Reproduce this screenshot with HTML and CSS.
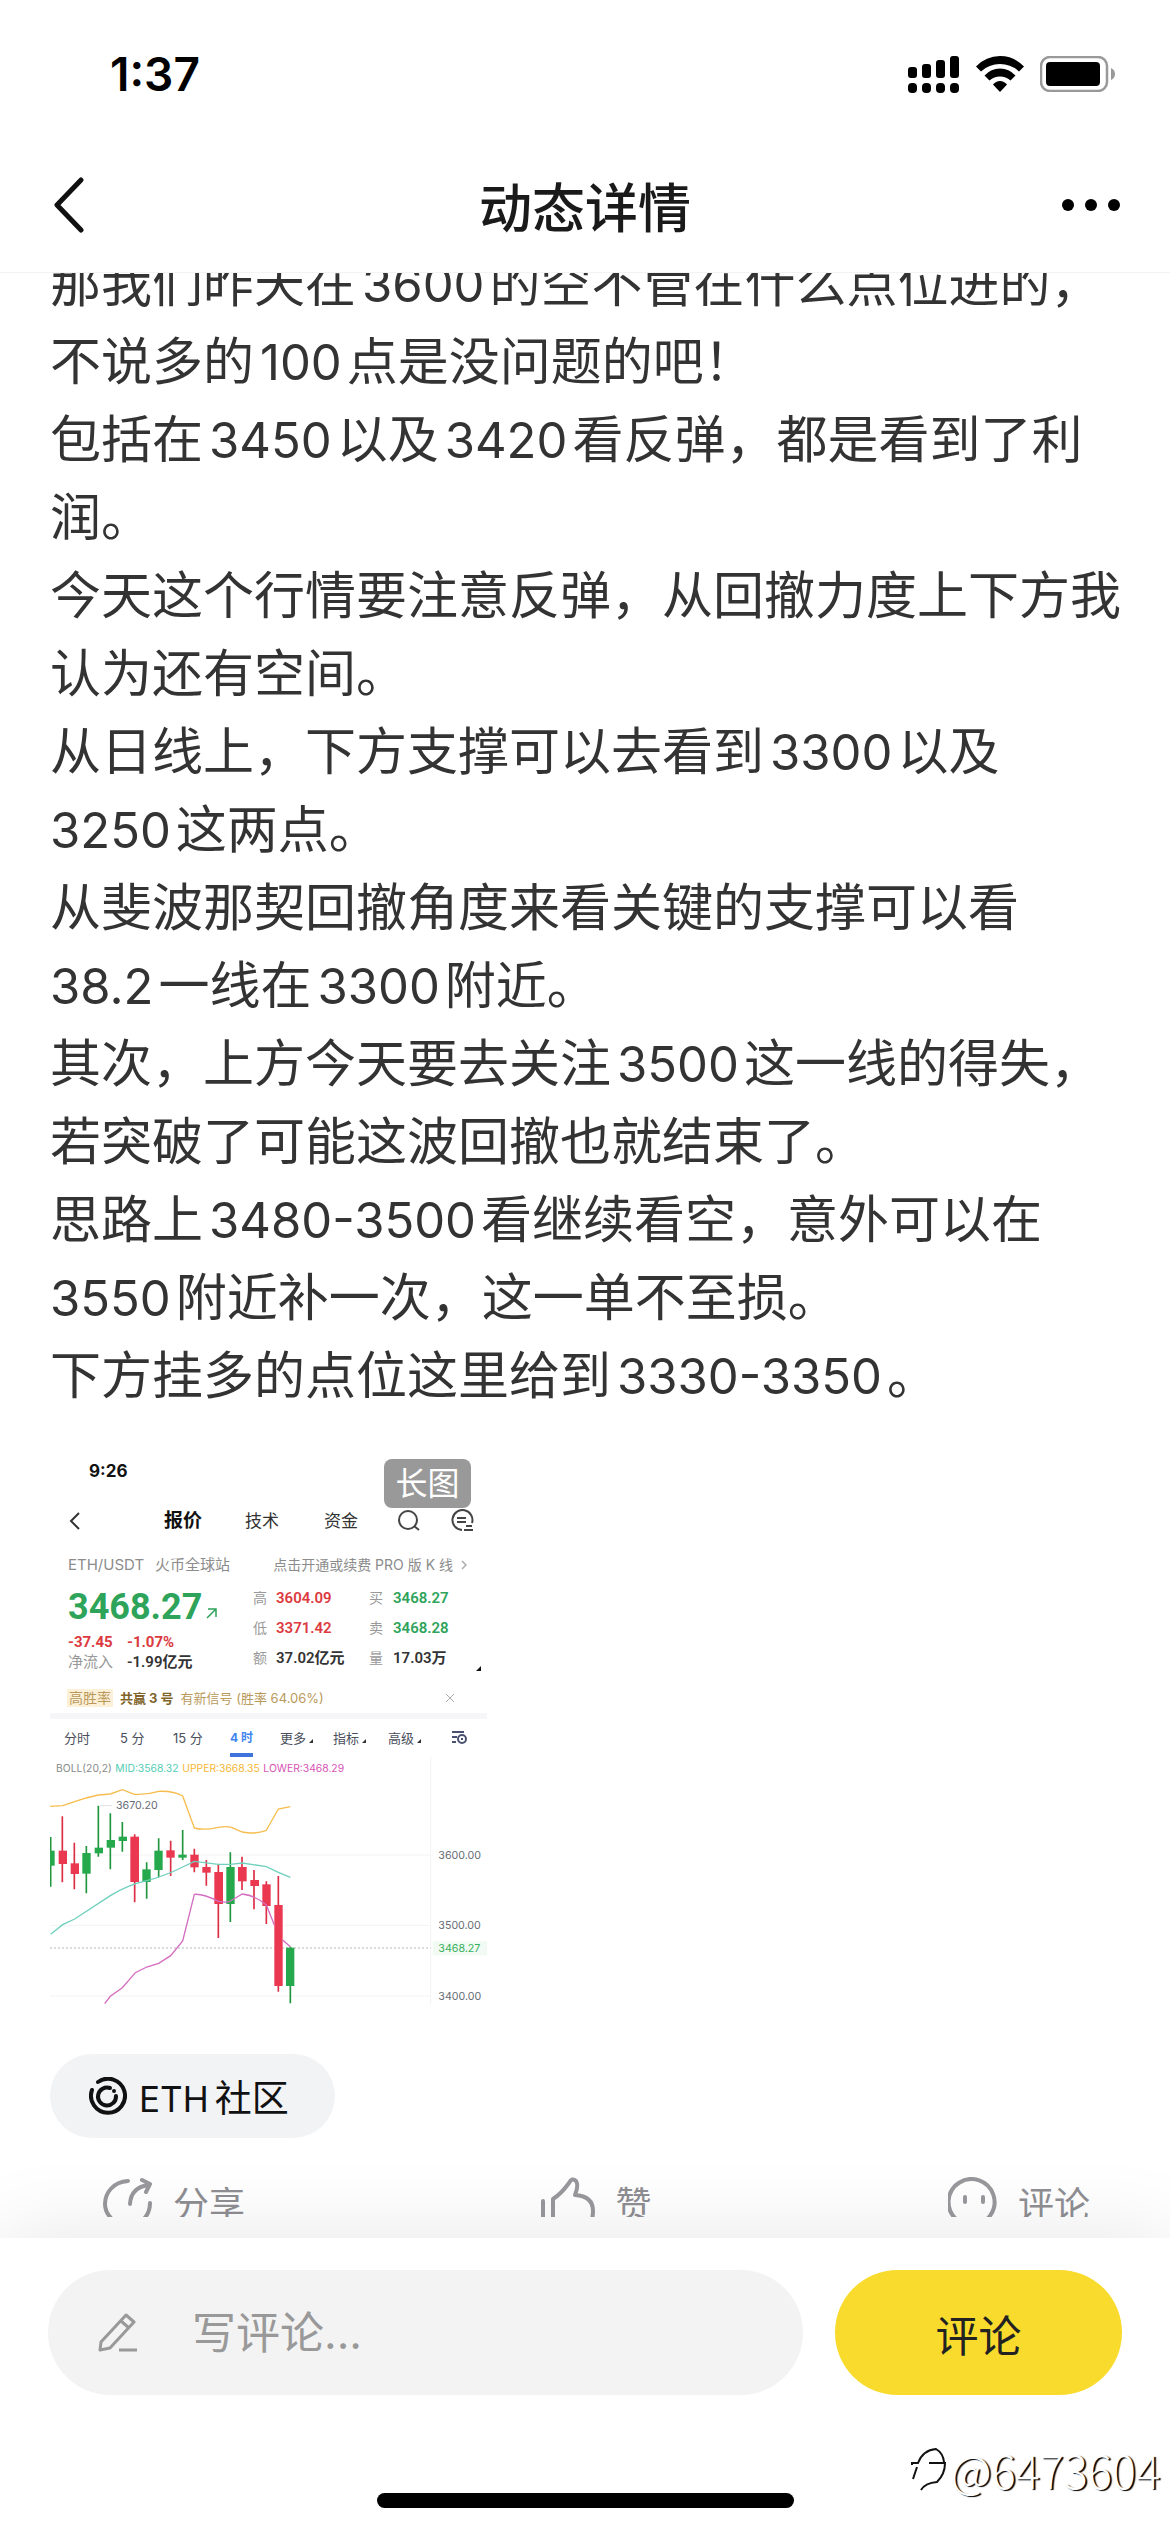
FILE: index.html
```html
<!DOCTYPE html>
<html lang="zh-CN">
<head>
  <meta charset="UTF-8">
  <meta name="viewport" content="width=device-width, initial-scale=1.0">
  <title>动态详情</title>
  <link rel="stylesheet" href="styles.css">
</head>
<body>
  <div class="page">
    <header class="header">
      <div class="status-bar">
        <span class="time">1:37</span>
        <div class="status-icons">
          <svg width="52" height="38" viewBox="0 0 52 38">
            <rect x="0" y="12" width="9" height="11" rx="3"/>
            <rect x="14" y="9" width="9" height="14" rx="3"/>
            <rect x="28" y="5" width="9" height="18" rx="3"/>
            <rect x="42" y="1" width="9" height="22" rx="3"/>
            <rect x="0" y="28" width="9" height="10" rx="4"/>
            <rect x="14" y="28" width="9" height="10" rx="4"/>
            <rect x="28" y="28" width="9" height="10" rx="4"/>
            <rect x="42" y="28" width="9" height="10" rx="4"/>
          </svg>
          <svg width="48" height="36" viewBox="0 0 48 36">
            <path d="M0 10.500Q10 0 24 0T48 10.500L43 15.500Q35 8 24 8T5 15.500Z"/>
            <path d="M8.500 19.500Q15 12.500 24 12.500T39.500 19.500L34.500 24.500Q30 20.500 24 20.500T13.500 24.500Z"/>
            <path d="M17 28.500Q20 25 24 25T31 28.500L24 36Z"/>
          </svg>
          <svg width="76" height="36" viewBox="0 0 76 36">
            <rect x="1" y="1" width="66" height="34" rx="9" fill="none" stroke="#999" stroke-width="2.500"/>
            <rect x="6" y="6" width="54" height="24" rx="4"/>
            <path d="M71 12Q75 14 75 18T71 24Z" fill="#999"/>
          </svg>
        </div>
      </div>
      <div class="nav-bar">
        <button class="icon-btn" aria-label="返回">
          <svg width="34" height="56" viewBox="0 0 34 56"><path d="M31 3L7 28L31 53" fill="none" stroke="#111" stroke-width="5" stroke-linecap="round" stroke-linejoin="round"/></svg>
        </button>
        <h1 class="title">动态详情</h1>
        <button class="icon-btn" aria-label="更多">
          <svg width="60" height="14" viewBox="0 0 60 14"><circle cx="8" cy="7" r="6"/><circle cx="31" cy="7" r="6"/><circle cx="54" cy="7" r="6"/></svg>
        </button>
      </div>
    </header>

    <main class="content">
      <article class="post">
        <p>那我们昨天在<span class="num">3600</span>的空不管在什么点位进的，不说多的<span class="num">100</span>点是没问题的吧！</p>
        <p>包括在<span class="num">3450</span>以及<span class="num">3420</span>看反弹，都是看到了利润。</p>
        <p>今天这个行情要注意反弹，从回撤力度上下方我认为还有空间。</p>
        <p>从日线上，下方支撑可以去看到<span class="num">3300</span>以及<br><span class="num first">3250</span>这两点。</p>
        <p>从斐波那契回撤角度来看关键的支撑可以看<br><span class="num first">38.2</span>一线在<span class="num">3300</span>附近。</p>
        <p>其次，上方今天要去关注<span class="num">3500</span>这一线的得失，若突破了可能这波回撤也就结束了。</p>
        <p>思路上<span class="num">3480-3500</span>看继续看空，意外可以在<br><span class="num first">3550</span>附近补一次，这一单不至损。</p>
        <p>下方挂多的点位这里给到<span class="num">3330-3350</span>。</p>
      </article>

      <figure class="shot">
        <span class="long-badge">长图</span>
        <div class="shot-time">9:26</div>
        <div class="shot-nav">
          <svg width="14" height="20" viewBox="0 0 14 20"><path d="M11 2L3 10L11 18" fill="none" stroke="#333" stroke-width="2"/></svg>
          <b>报价</b>
          <span>技术</span>
          <span>资金</span>
          <svg width="22" height="22" viewBox="0 0 22 22" fill="none" stroke="#444" stroke-width="2"><circle cx="10" cy="10" r="9"/><path d="M16 16L21 20"/></svg>
          <svg width="24" height="24" viewBox="0 0 24 24" fill="none" stroke="#444" stroke-width="2"><path d="M11 21A10 10 0 1 1 21 14M6 9H15M6 13H15M15 17H21M13 21H22"/></svg>
        </div>
        <div class="shot-pair">
          <span>ETH/USDT</span>
          <span>火币全球站</span>
          <span class="pro">点击开通或续费 PRO 版 K 线</span>
          <svg width="6" height="10" viewBox="0 0 6 10"><path d="M1 1L5 5L1 9" fill="none" stroke="#aaa" stroke-width="1.500"/></svg>
        </div>
        <div class="shot-quote">
          <div class="quote-main">
            <div class="price">3468.27<svg width="12" height="12" viewBox="0 0 12 12"><path d="M1 11L10 2M2 2H10V10" fill="none" stroke="#2ea35a" stroke-width="1.500"/></svg></div>
            <div class="change down"><span>-37.45</span><span>-1.07%</span></div>
            <div class="flow"><span class="muted">净流入</span><b>-1.99亿元</b></div>
          </div>
          <div class="quote-grid">
            <span class="muted">高</span><b class="down">3604.09</b><span class="muted">买</span><b class="up">3468.27</b>
            <span class="muted">低</span><b class="down">3371.42</b><span class="muted">卖</span><b class="up">3468.28</b>
            <span class="muted">额</span><b>37.02亿元</b><span class="muted">量</span><b class="volume">17.03万<i class="corner"></i></b>
          </div>
        </div>
        <div class="shot-notice">
          <span class="tag">高胜率</span>
          <b>共赢 3 号</b>
          <span>有新信号 (胜率 64.06%)</span>
          <svg width="10" height="10" viewBox="0 0 10 10"><path d="M1 1L9 9M9 1L1 9" stroke="#aaa"/></svg>
        </div>
        <div class="shot-tabs">
          <span>分时</span>
          <span>5 分</span>
          <span>15 分</span>
          <span class="active">4 时</span>
          <span class="drop">更多</span>
          <span class="drop">指标</span>
          <span class="drop">高级</span>
          <svg width="17" height="14" viewBox="0 0 17 14" fill="none" stroke="#4a5070" stroke-width="2"><path d="M1 1H13M1 6H6M1 11H5"/><circle cx="11" cy="8" r="4"/><path d="M10 8H12"/></svg>
        </div>
        <svg class="chart" viewBox="30 141 1311 744">
          <g stroke="#f3f3f5" stroke-width="3">
            <path d="M30 435H1172M30 646H1172M30 858H1172M1172 141V885"/>
          </g>
          <g class="legend">
            <text x="48" y="186" fill="#8a8a8a">BOLL(20,2)</text>
            <text x="226" y="186" fill="#55cdb5">MID:3568.32</text>
            <text x="427" y="186" fill="#f7b733">UPPER:3668.35</text>
            <text x="670" y="186" fill="#d653b4">LOWER:3468.29</text>
          </g>
          <path d="M30 714H1172" stroke="#b8b8b8" stroke-width="3" stroke-dasharray="6 6"/>
          <g stroke="#22963f" stroke-width="5">
            <path d="M32 381V530M139 408V550M175 287V440M211 310V478M247 336V425M320 457V566M356 385V502M428 360V450M571 427V636M751 710V880"/>
          </g>
          <g stroke="#dc2f45" stroke-width="5">
            <path d="M67 319V517M103 398V538M284 373V577M392 392V498M463 416V487M499 450V527M535 464V684M606 440V540M642 480V598M679 514V642M715 498V845"/>
          </g>
          <g fill="#26a94c">
            <rect x="30" y="422" width="14" height="45"/>
            <rect x="127" y="429" width="25" height="62"/>
            <rect x="164" y="413" width="25" height="17"/>
            <rect x="200" y="390" width="25" height="23"/>
            <rect x="236" y="380" width="25" height="13"/>
            <rect x="307" y="478" width="25" height="38"/>
            <rect x="343" y="422" width="25" height="58"/>
            <rect x="415" y="434" width="25" height="9"/>
            <rect x="559" y="471" width="25" height="111"/>
            <rect x="738" y="713" width="25" height="115"/>
          </g>
          <g fill="#ea3850">
            <rect x="56" y="422" width="25" height="40"/>
            <rect x="92" y="460" width="25" height="32"/>
            <rect x="271" y="380" width="26" height="136"/>
            <rect x="379" y="421" width="25" height="22"/>
            <rect x="451" y="434" width="25" height="38"/>
            <rect x="487" y="471" width="25" height="17"/>
            <rect x="523" y="486" width="26" height="96"/>
            <rect x="594" y="471" width="26" height="43"/>
            <rect x="631" y="510" width="26" height="18"/>
            <rect x="667" y="523" width="25" height="65"/>
            <rect x="703" y="585" width="25" height="243"/>
          </g>
          <g fill="none" stroke-width="4">
            <path stroke="#f6bd4e" d="M30 289L68 287L104 275Q140 262 175 255L211 252L247 239L283 253Q320 255 356 244Q400 242 428 258L463 354Q490 362 535 352Q560 348 574 352L607 366Q645 374 679 361L715 297L751 290"/>
            <path stroke="#6fd0bd" d="M32 673L68 644L104 627L211 557Q260 526 320 512Q375 498 428 471L463 454L535 463H571L607 459L679 470L715 487L751 502"/>
            <path stroke="#d46cc0" d="M194 881L211 859L247 833L286 788L320 771L356 760L392 737L428 693L463 553Q490 551 535 574Q560 579 571 573L607 552Q645 556 679 585L703 645M728 690L751 710"/>
          </g>
          <path d="M180 287H216" stroke="#e2e2e2" stroke-width="3"/>
          <rect x="1178" y="694" width="163" height="42" fill="#f1faf3"/>
          <g class="axis">
            <text x="228" y="298">3670.20</text>
            <text x="1195" y="446">3600.00</text>
            <text x="1195" y="657">3500.00</text>
            <text x="1195" y="725" fill="#36b05c">3468.27</text>
            <text x="1195" y="869">3400.00</text>
          </g>
        </svg>
      </figure>

      <a class="topic" href="#">
        <svg width="38" height="38" viewBox="0 0 38 38" fill="none" stroke="#111" stroke-width="4" stroke-linecap="round">
          <path d="M9 5A17 17 0 1 1 3 13"/>
          <path d="M21 11A9 9 0 1 0 27 19"/>
          <circle cx="25" cy="14" r="2" fill="#111" stroke="none"/>
        </svg>
        <span><span class="latin">ETH</span>社区</span>
      </a>

      <div class="actions">
        <button class="action">
          <svg width="50" height="50" viewBox="0 0 50 50"><path d="M25 4C10 5 2 16 2 27C2 38 13 49 25 49C38 49 47 38 47 26M27 27Q28 10 46 8M39 3L47 7L43 15"/></svg>
          分享
        </button>
        <button class="action">
          <svg width="54" height="50" viewBox="0 0 54 50"><path d="M2 24V49M12 49V22Q20 17 28 6Q31 0 35 4Q38 8 34 18Q52 19 52 34Q52 49 42 49Z"/></svg>
          赞
        </button>
        <button class="action">
          <svg width="50" height="50" viewBox="0 0 50 50"><path d="M17 20V25M35 20V25M8 42A23 23 0 1 1 25 48H8Z"/></svg>
          评论
        </button>
      </div>
    </main>

    <footer class="footer">
      <form class="comment-form">
        <label class="comment-box">
          <svg width="40" height="40" viewBox="0 0 40 40" fill="none" stroke="#999" stroke-width="3" stroke-linejoin="round"><path d="M3 29L28 2L36 9L12 35L2 37ZM23 8L31 15M21 37H39"/></svg>
          <input type="text" placeholder="写评论..." aria-label="写评论">
        </label>
        <button class="submit" type="button">评论</button>
      </form>
      <div class="home-indicator"></div>
      <div class="watermark">
        <svg width="36" height="44" viewBox="0 0 36 44" fill="none" stroke="#111" stroke-width="2"><path d="M1 17V15H7Q12 2 25 1Q32 5 33 14M18 15H34Q34 26 26 34Q14 35 10 42M6 19L2 31"/></svg>
        <span>@6473604</span>
      </div>
    </footer>
  </div>
</body>
</html>
```
FILE: styles.css
```css
* {
  box-sizing: border-box;
}
body {
  margin: 0;
  background: #fff;
  color: #333;
  font-family: Inter, "Noto Sans CJK SC", sans-serif;
}
button {
  padding: 0;
  border: none;
  background: none;
  color: inherit;
  font-family: inherit;
  cursor: pointer;
}
svg {
  display: block;
  flex-shrink: 0;
}
.page {
  display: flex;
  flex-direction: column;
  height: 100vh;
}

/* header */
.header {
  flex-shrink: 0;
  border-bottom: 1px solid #f3f3f3;
}
.status-bar {
  display: flex;
  justify-content: space-between;
  align-items: center;
  height: 148px;
  padding: 0 54px 0 110px;
  color: #000;
}
.time {
  font-size: 46px;
  font-weight: 600;
}
.status-icons {
  display: flex;
  align-items: center;
  gap: 16px;
}
.nav-bar {
  display: flex;
  justify-content: space-between;
  align-items: center;
  height: 124px;
  padding: 0 50px 10px;
}
.icon-btn {
  display: flex;
  width: 60px;
}
.title {
  margin: 0;
  color: #1a1a1a;
  font-size: 53px;
  font-weight: 500;
}

/* post */
.content {
  position: relative;
  flex: 1;
  min-height: 0;
  overflow: hidden;
  margin-bottom: 21px;
  padding: 0 48px 0 50px;
}
.post {
  margin-top: -28px;
  font-size: 51px;
  line-height: 78px;
}
.post p {
  margin: 0;
}
.num {
  margin: 0 5px 0 6px;
  font-size: 49px;
  line-height: 1;
}
.num.first {
  margin-left: 0;
}

/* long picture preview */
.shot {
  position: relative;
  width: 437px;
  margin: 32px 0 0;
  font-size: 15px;
  line-height: 18px;
  white-space: nowrap;
}
.long-badge {
  position: absolute;
  top: 12px;
  right: 16px;
  width: 87px;
  border-radius: 8px;
  background: #999;
  color: #fff;
  font-size: 32px;
  line-height: 49px;
  text-align: center;
}
.shot-time {
  padding-left: 39px;
  color: #111;
  font-size: 17px;
  font-weight: 700;
  line-height: 48px;
}
.shot-nav {
  display: grid;
  grid-template-columns: 96px 81px 79px 74px 53px 24px;
  align-items: center;
  height: 52px;
  padding-left: 18px;
  font-size: 17px;
}
.shot-nav b {
  color: #111;
  font-size: 19px;
}
.shot-pair {
  display: flex;
  align-items: center;
  height: 36px;
  padding: 0 20px 0 18px;
  color: #8c8c8c;
}
.shot-pair span {
  margin-right: 11px;
}
.shot-pair .pro {
  margin: 0 8px 0 auto;
  font-size: 14px;
}
.shot-quote {
  display: flex;
  font-family: Roboto, "Noto Sans CJK SC", sans-serif;
}
.quote-main {
  width: 185px;
  flex-shrink: 0;
  margin-left: 18px;
}
.price {
  display: flex;
  align-items: flex-end;
  gap: 4px;
  height: 48px;
  padding-bottom: 9px;
  color: #2ea35a;
  font-size: 36px;
  font-weight: 700;
  line-height: 30px;
}
.price svg {
  margin-bottom: 3px;
}
.change,
.flow {
  display: grid;
  grid-template-columns: 59px 1fr;
}
.change {
  font-weight: 700;
  line-height: 22px;
}
.flow b,
.quote-grid b {
  font-weight: 600;
}
.quote-grid {
  display: grid;
  flex: 1;
  grid-template-columns: 23px 93px 24px 1fr;
  grid-auto-rows: 30px;
  align-items: center;
}
.quote-grid .muted {
  font-size: 14px;
}
.muted {
  color: #999;
}
.up {
  color: #2ea35a;
}
.down {
  color: #dc3a3f;
}
.volume {
  display: flex;
  align-items: center;
  justify-content: space-between;
  padding-right: 6px;
}
.corner {
  margin-top: 20px;
  border-bottom: 5px solid #111;
  border-left: 5px solid transparent;
}
.shot-notice {
  display: flex;
  align-items: center;
  gap: 7px;
  height: 40px;
  padding: 10px 32px 0 17px;
  color: #b99a5b;
  font-size: 14px;
}
.shot-notice b {
  color: #80642a;
  font-size: 13px;
}
.shot-notice span:last-of-type {
  font-size: 13px;
}
.shot-notice svg {
  margin-left: auto;
}
.tag {
  padding: 0 2px;
  background: #fdf0d9;
}
.shot-tabs {
  display: grid;
  grid-template-columns: 56px 53px 57px 50px 53px 55px 63px 17px;
  align-items: center;
  justify-items: start;
  height: 44px;
  padding-left: 14px;
  border-top: 6px solid #f6f6f8;
  color: #4a4f5c;
  font-size: 13px;
}
.active {
  border-bottom: 4px solid #3e74dc;
  color: #3f86ee;
  font-size: 12px;
  font-weight: 700;
  line-height: 30px;
  padding-top: 4px;
}
.drop::after {
  content: "";
  display: inline-block;
  margin-left: 3px;
  border-bottom: 4px solid #333;
  border-left: 4px solid transparent;
}
.chart {
  width: 100%;
}
.legend {
  font-size: 31px;
}
.axis {
  fill: #666b75;
  font-size: 32px;
}

/* topic and actions */
.topic {
  display: inline-flex;
  align-items: center;
  gap: 12px;
  height: 84px;
  margin-top: 49px;
  padding: 0 46px 0 39px;
  border-radius: 42px;
  background: #f2f3f5;
  color: #111;
  font-size: 37px;
  text-decoration: none;
}
.latin {
  margin-right: 6px;
  font-size: 35px;
}
.actions {
  display: flex;
  justify-content: space-between;
  margin-top: 39px;
  padding: 0 32px 0 53px;
}
.action {
  display: flex;
  align-items: center;
  gap: 20px;
  height: 50px;
  color: #8e8e93;
  font-size: 36px;
}
.action svg {
  fill: none;
  stroke: #98989d;
  stroke-width: 4;
  stroke-linecap: round;
  stroke-linejoin: round;
}

/* comment bar */
.footer {
  position: relative;
  flex-shrink: 0;
  height: 294px;
  padding: 32px 48px 0;
  background: #fff;
  box-shadow: 0 0 80px rgba(0, 0, 0, 0.1);
}
.comment-form {
  display: flex;
  gap: 32px;
}
.comment-box {
  display: flex;
  flex: 1;
  align-items: center;
  gap: 54px;
  min-width: 0;
  height: 125px;
  padding: 0 50px;
  border-radius: 63px;
  background: #f3f3f3;
}
.comment-box input {
  flex: 1;
  min-width: 0;
  padding: 0;
  border: none;
  outline: none;
  background: none;
  font-family: inherit;
  font-size: 44px;
}
.comment-box input::placeholder {
  color: #999;
}
.submit {
  width: 287px;
  height: 125px;
  border-radius: 63px;
  background: #f9db2d;
  color: #222;
  font-size: 43px;
}
.home-indicator {
  position: absolute;
  bottom: 24px;
  left: 50%;
  width: 417px;
  height: 15px;
  margin-left: -208px;
  border-radius: 8px;
  background: #000;
}
.watermark {
  position: absolute;
  right: 10px;
  bottom: 36px;
  display: flex;
  align-items: center;
  gap: 4px;
  color: #fff;
  font-family: "Noto Sans CJK SC", sans-serif;
  font-size: 45px;
  font-weight: 300;
  line-height: 52px;
  text-shadow: 2px 1px 1px #000;
}
```
